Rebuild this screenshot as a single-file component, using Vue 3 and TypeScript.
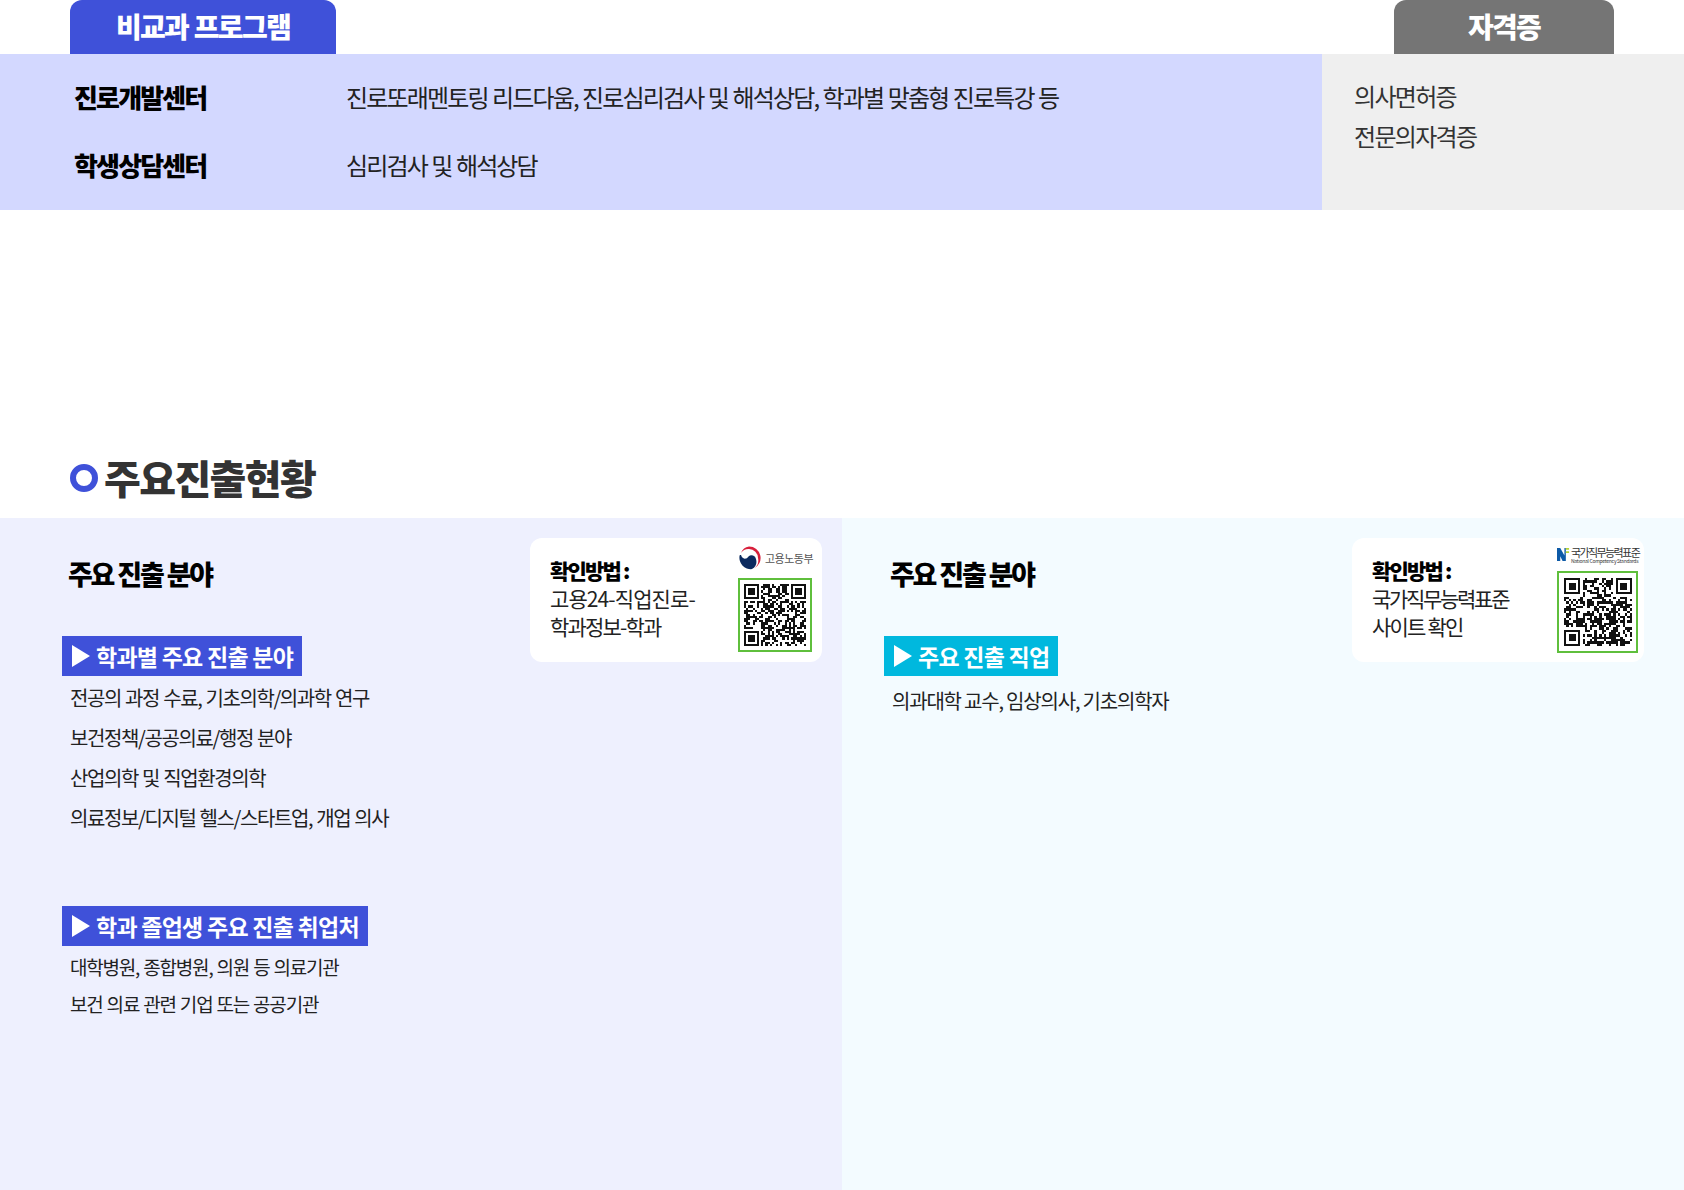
<script setup lang="ts">
interface Section {
  color: string
  label: string
  items: string[]
}

function makeQr(size: number, seed: number): string {
  let s = seed
  const rnd = () => {
    s = (s * 1664525 + 1013904223) >>> 0
    return (s >>> 16) / 65536
  }
  const finders: [number, number][] = [
    [0, 0],
    [size - 7, 0],
    [0, size - 7]
  ]
  const inFinder = (x: number, y: number) =>
    finders.find(([fx, fy]) => x >= fx - 1 && x <= fx + 7 && y >= fy - 1 && y <= fy + 7)
  let d = ''
  for (let y = 0; y < size; y++) {
    for (let x = 0; x < size; x++) {
      const f = inFinder(x, y)
      let on: boolean
      if (f) {
        const dx = x - f[0]
        const dy = y - f[1]
        const inside = dx >= 0 && dx <= 6 && dy >= 0 && dy <= 6
        const ring = dx === 0 || dx === 6 || dy === 0 || dy === 6
        const core = dx >= 2 && dx <= 4 && dy >= 2 && dy <= 4
        on = inside && (ring || core)
      } else {
        on = rnd() > 0.45
      }
      if (on) d += `M${x} ${y}h1v1h-1z`
    }
  }
  return d
}

const qrLeft = makeQr(29, 7)
const qrRight = makeQr(29, 91)

const programs = [
  { name: '진로개발센터', desc: '진로또래멘토링 리드다움, 진로심리검사 및 해석상담, 학과별 맞춤형 진로특강 등' },
  { name: '학생상담센터', desc: '심리검사 및 해석상담' }
]

const leftSections: Section[] = [
  {
    color: '#3f51d9',
    label: '학과별 주요 진출 분야',
    items: ['전공의 과정 수료, 기초의학/의과학 연구', '보건정책/공공의료/행정 분야', '산업의학 및 직업환경의학', '의료정보/디지털 헬스/스타트업, 개업 의사']
  },
  {
    color: '#3f51d9',
    label: '학과 졸업생 주요 진출 취업처',
    items: ['대학병원, 종합병원, 의원 등 의료기관', '보건 의료 관련 기업 또는 공공기관']
  }
]
</script>

<template>
  <div class="page">
    <div class="tabs">
      <div class="tab tab-blue">비교과 프로그램</div>
      <div class="tab tab-gray">자격증</div>
    </div>

    <div class="top-panels">
      <div class="programs">
        <div v-for="p in programs" :key="p.name" class="program">
          <strong class="program-name">{{ p.name }}</strong>
          <span class="program-desc">{{ p.desc }}</span>
        </div>
      </div>
      <div class="licenses">
        <p>의사면허증</p>
        <p>전문의자격증</p>
      </div>
    </div>

    <h2 class="section-title"><i class="ring"></i>주요진출현황</h2>

    <div class="columns">
      <section class="col col-left">
        <h3 class="col-title">주요 진출 분야</h3>
        <div class="card">
          <div class="card-text">
            <b>확인방법 :</b>
            <span class="wide">고용24-직업진로-</span>
            <span>학과정보-학과</span>
          </div>
          <div class="card-side side-left">
            <div class="org">
              <svg class="emblem" viewBox="0 0 24 24" width="24" height="24">
                <circle cx="12" cy="12" r="11.500" fill="#fff" />
                <path d="M4 7A10 10 0 0 1 12 .5a11.500 11.500 0 0 1 5 21.900A10 10 0 0 0 21 12 9 9 0 0 0 12 3 9 9 0 0 0 4 7z" fill="#d8203c" />
                <path d="M2.600 9.500A11.500 11.500 0 0 0 15 23.100A9 9 0 0 0 19 13a4.500 4.500 0 0 0-7.500-2.600 4.500 4.500 0 0 1-4.500 2.200A5 5 0 0 1 4 8z" fill="#0c2a5f" />
              </svg>
              <span class="org-name">고용노동부</span>
            </div>
            <div class="qr qr-a">
              <svg viewBox="0 0 29 29" shape-rendering="crispEdges"><path :d="qrLeft" fill="#111" /></svg>
            </div>
          </div>
        </div>

        <div v-for="(s, i) in leftSections" :key="s.label" class="block" :class="i === 0 ? 'block-first' : 'block-second'">
          <div class="badge" :style="{ background: s.color }"><i class="tri"></i>{{ s.label }}</div>
          <ul class="items" :class="i === 1 ? 'items-tight' : ''">
            <li v-for="it in s.items" :key="it">{{ it }}</li>
          </ul>
        </div>
      </section>

      <section class="col col-right">
        <h3 class="col-title">주요 진출 분야</h3>
        <div class="card">
          <div class="card-text">
            <b>확인방법 :</b>
            <span class="tight">국가직무능력표준</span>
            <span>사이트 확인</span>
          </div>
          <div class="card-side side-right">
            <div class="ncs">
              <svg viewBox="0 0 14 16" width="13" height="15">
                <path d="M0 1h3.500l4.500 8V1h1.500v14H6L3.500 10v5H0z" fill="#0d5aa7" />
                <path d="M9.500 1H13v2H9.500zM9.500 4.500H13v2H9.500z" fill="#b6d334" />
              </svg>
              <div class="ncs-text">
                <span class="ncs-ko">국가직무능력표준</span>
                <span class="ncs-en">National Competency Standards</span>
              </div>
            </div>
            <div class="qr qr-b">
              <svg viewBox="0 0 29 29" shape-rendering="crispEdges"><path :d="qrRight" fill="#111" /></svg>
            </div>
          </div>
        </div>

        <div class="block block-first">
          <div class="badge badge-cyan"><i class="tri"></i>주요 진출 직업</div>
          <ul class="items items-right">
            <li>의과대학 교수, 임상의사, 기초의학자</li>
          </ul>
        </div>
      </section>
    </div>
  </div>
</template>

<style>
html,
body {
  margin: 0;
  background: #fff;
}
</style>

<style scoped>
.page {
  width: 1684px;
  height: 1190px;
  overflow: hidden;
  display: flex;
  flex-direction: column;
  font-family: "Noto Sans CJK KR", "Noto Sans", sans-serif;
  color: #111;
}
.tabs {
  height: 54px;
  display: flex;
  justify-content: space-between;
  padding: 0 70px;
}
.tab {
  height: 54px;
  box-sizing: border-box;
  padding-bottom: 3px;
  border-top-left-radius: 12px;
  border-top-right-radius: 12px;
  display: flex;
  align-items: center;
  justify-content: center;
  color: #fff;
  font-size: 28px;
  font-weight: 900;
  letter-spacing: -1.7px;
  word-spacing: 1px;
}
.tab-blue {
  width: 266px;
  background: #3f51d9;
}
.tab-gray {
  width: 220px;
  background: #757575;
}
.top-panels {
  height: 156px;
  display: flex;
}
.programs {
  width: 1322px;
  background: #d3d8ff;
  padding: 22px 0 0 74px;
  box-sizing: border-box;
}
.program {
  height: 40px;
  margin-bottom: 28px;
  display: flex;
  align-items: center;
}
.program-name {
  width: 272px;
  font-size: 26px;
  font-weight: 900;
  letter-spacing: -1.85px;
  color: #000;
}
.program-desc {
  font-size: 24px;
  letter-spacing: -1.85px;
  word-spacing: 0.85px;
  color: #222;
}
.licenses {
  flex: 1;
  background: #efefef;
  padding: 22px 0 0 32px;
  color: #333;
  font-size: 24px;
  letter-spacing: -1.7px;
}
.licenses p {
  margin: 0;
  height: 40px;
  line-height: 40px;
}
.section-title {
  margin: 236px 0 10px 70px;
  height: 62px;
  display: flex;
  align-items: center;
  gap: 6px;
  font-size: 40px;
  font-weight: 900;
  letter-spacing: -1.6px;
  color: #333;
}
.ring {
  width: 28px;
  height: 28px;
  margin-top: 2px;
  box-sizing: border-box;
  border: 6px solid #3f51d9;
  border-radius: 50%;
}
.columns {
  flex: 1;
  display: flex;
}
.col {
  position: relative;
  width: 842px;
  box-sizing: border-box;
  padding: 0;
}
.col-left {
  background: #eef0fe;
  padding-left: 62px;
}
.col-right {
  background: #f3fbff;
  padding-left: 42px;
}
.col-title {
  margin: 36px 0 0 6px;
  height: 40px;
  line-height: 40px;
  font-size: 27px;
  font-weight: 900;
  letter-spacing: -2.3px;
  word-spacing: 0.4px;
  color: #000;
}
.card {
  position: absolute;
  top: 20px;
  left: 530px;
  width: 292px;
  height: 124px;
  box-sizing: border-box;
  background: #fff;
  border-radius: 12px;
}
.col-right .card {
  left: 510px;
}
.card-text {
  position: absolute;
  left: 20px;
  top: 18px;
  display: flex;
  flex-direction: column;
  font-size: 21px;
  line-height: 28px;
  letter-spacing: -1.8px;
  color: #222;
}
.card-text .wide {
  letter-spacing: -0.9px;
}
.card-text .tight {
  letter-spacing: -2.3px;
}
.card-text b {
  color: #000;
  font-weight: 900;
}
.card-side {
  position: absolute;
  display: flex;
  flex-direction: column;
  align-items: flex-start;
}
.side-left {
  left: 208px;
  top: 8px;
}
.side-right {
  left: 205px;
  top: 8px;
}
.org {
  height: 24px;
  display: flex;
  align-items: center;
  gap: 4px;
  margin-bottom: 8px;
}
.emblem {
  display: block;
  margin-left: -1px;
}
.org-name {
  font-size: 11px;
  letter-spacing: -0.5px;
  color: #555;
}
.ncs {
  height: 17px;
  display: flex;
  align-items: center;
  gap: 1px;
  margin-bottom: 8px;
}
.ncs-text {
  display: flex;
  flex-direction: column;
  line-height: 1;
  padding-top: 1px;
}
.ncs-ko {
  font-size: 11px;
  letter-spacing: -1.6px;
  line-height: 11px;
  color: #333;
}
.ncs-en {
  font-size: 5px;
  line-height: 6px;
  letter-spacing: -0.28px;
  color: #333;
  white-space: nowrap;
}
.qr {
  box-sizing: border-box;
  background: #fff;
  border: 2px solid #5fbf3c;
  display: flex;
  align-items: center;
  justify-content: center;
}
.qr svg {
  display: block;
}
.qr-a {
  width: 74px;
  height: 74px;
}
.qr-a svg {
  width: 62px;
  height: 62px;
}
.qr-b {
  width: 81px;
  height: 82px;
}
.qr-b svg {
  width: 68px;
  height: 68px;
}
.block-first {
  margin-top: 42px;
}
.block-second {
  margin-top: 68px;
}
.badge {
  display: inline-flex;
  align-items: center;
  height: 40px;
  padding: 0 9px 0 10px;
  font-size: 23px;
  font-weight: 700;
  letter-spacing: -0.75px;
  color: #fff;
}
.badge-cyan {
  background: #00b8de;
}
.tri {
  width: 0;
  height: 0;
  border-left: 18px solid #fff;
  border-top: 11px solid transparent;
  border-bottom: 11px solid transparent;
  margin-right: 6px;
}
.items {
  list-style: none;
  margin: 2px 0 0;
  padding: 0 0 0 8px;
  font-size: 20px;
  letter-spacing: -1.4px;
  word-spacing: 1px;
  color: #222;
}
.items li {
  height: 40px;
  line-height: 40px;
}
.items-tight {
  margin-top: 2px;
  font-size: 19px;
  letter-spacing: -1.2px;
}
.items-tight li {
  height: 37px;
  line-height: 37px;
}
.items-right {
  margin-top: 5px;
  letter-spacing: -1.2px;
  word-spacing: 0;
}
</style>
